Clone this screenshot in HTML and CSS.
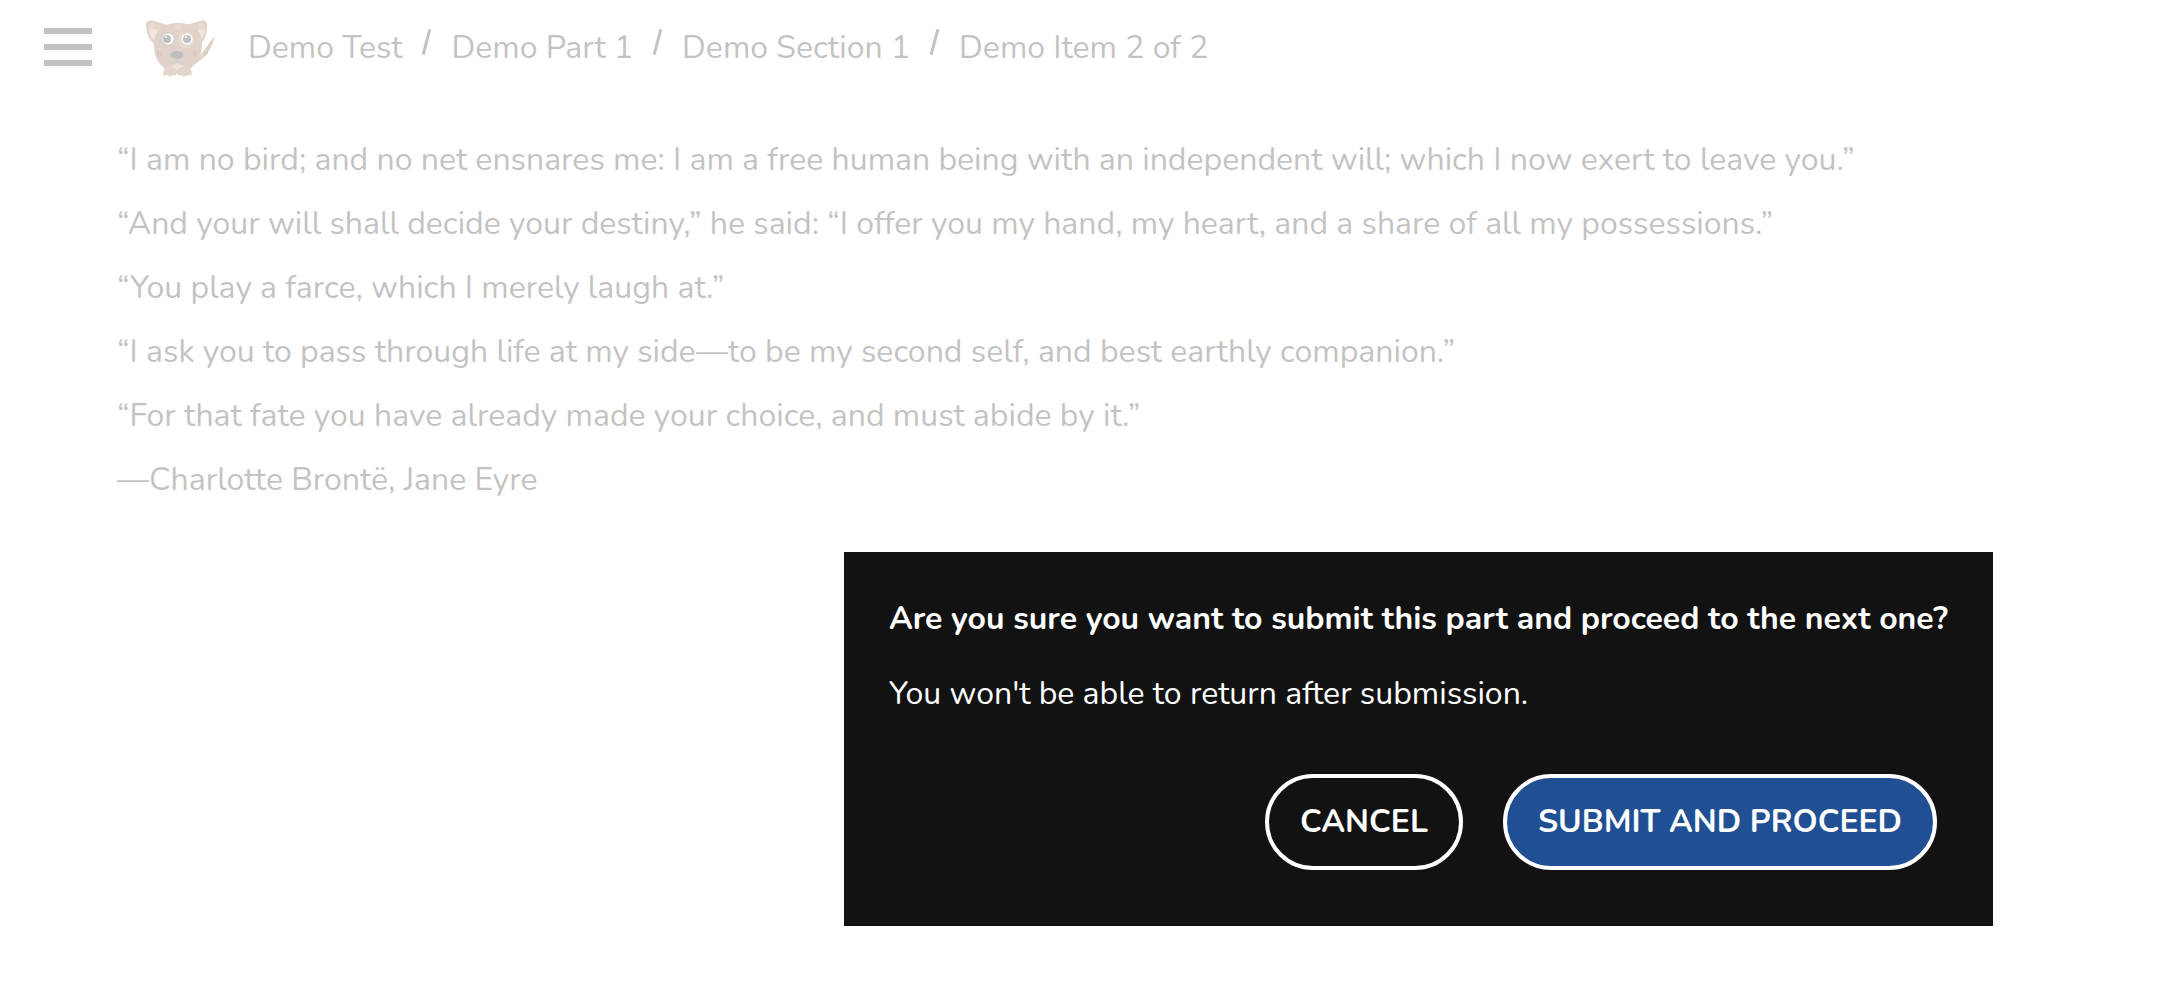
FILE: index.html
```html
<!DOCTYPE html>
<html lang="en">
<head>
    <meta charset="utf-8">
    <title>Demo Test</title>
    <link rel="stylesheet" href="styles.css">
</head>
<body>
    <div class="page">
        <header class="topbar">
            <button class="menu-button" type="button" aria-label="Menu">
                <span class="menu-line"></span>
                <span class="menu-line"></span>
                <span class="menu-line"></span>
            </button>
            <svg class="logo" viewBox="0 -3 70 60" aria-hidden="true">
                <!-- tail -->
                <path d="M69 16 C66 27 62 36 48 45 L49 38 C58 34 61 24 69 16Z" fill="#94552e"/>
                <path d="M58 33 L62 29 L62 33 L58 37Z" fill="#6d3318"/>
                <!-- ears -->
                <path d="M0 7 C-1 1 4 -1 8 1 L22 5 L10 25 C3 21 1 14 0 7Z" fill="#965a38"/>
                <path d="M61 7 C62 1 58 -1 54 1 L40 5 L53 25 C59 21 61 14 61 7Z" fill="#965a38"/>
                <path d="M3 9 L15 10 L9 21 C5 18 3 14 3 9Z" fill="#cf9c78"/>
                <path d="M59 9 L47 10 L54 21 C57 18 59 14 59 9Z" fill="#cf9c78"/>
                <circle cx="6" cy="6" r="3" fill="#b8744f"/>
                <circle cx="55" cy="6" r="3" fill="#b8744f"/>
                <!-- head -->
                <path d="M32 3 C48 3 56 12 56 23 C56 31 54 40 46 47 L44 50 L19 50 L17 47 C9 40 8 31 8 23 C8 12 16 3 32 3Z" fill="#8c5330"/>
                <path d="M25 46 L31 42 L38 46 L31 52Z" fill="#c38d69"/>
                <!-- feet -->
                <path d="M17 53 C18 49 20 47 24 47 C28 47 30 49 31 51 C32 49 34 47 38 47 C43 47 45 50 46 53 C46 56 43 56 41 55 C39 57 36 57 35 55 C32 56 31 55 31 52 C31 55 30 56 27 55 C26 57 23 57 22 55 C19 56 16 56 17 53Z" fill="#99603a"/>
                <circle cx="32" cy="7" r="3" fill="#b9653c"/>
                <circle cx="21" cy="20" r="8" fill="#62503f"/>
                <circle cx="40" cy="20" r="8" fill="#a8704a"/>
                <circle cx="22" cy="19" r="5.5" fill="#fff"/>
                <circle cx="41" cy="19" r="5.5" fill="#fff"/>
                <circle cx="21" cy="19" r="4" fill="#000"/>
                <circle cx="41" cy="19" r="4" fill="#000"/>
                <circle cx="20" cy="17" r="1" fill="#fff"/>
                <circle cx="40" cy="17" r="1" fill="#fff"/>
                <ellipse cx="31" cy="35" rx="6.5" ry="4" fill="#000"/>
                <path d="M31 39 L31 41 C30 45 25 45 23 40 M31 41 C32 45 37 45 39 40" fill="none" stroke="#333" stroke-width="0.8"/>
                <ellipse cx="13" cy="34" rx="2.5" ry="3.5" fill="#6b3a22"/>
                <ellipse cx="49" cy="34" rx="2.5" ry="3.5" fill="#6b3a22"/>
            </svg>
            <nav aria-label="Breadcrumb">
                <ol class="breadcrumb">
                    <li>Demo Test</li>
                    <li>Demo Part 1</li>
                    <li>Demo Section 1</li>
                    <li>Demo Item 2 of 2</li>
                </ol>
            </nav>
        </header>
        <main class="content">
            <p>“I am no bird; and no net ensnares me: I am a free human being with an independent will; which I now exert to leave you.”</p>
            <p>“And your will shall decide your destiny,” he said: “I offer you my hand, my heart, and a share of all my possessions.”</p>
            <p>“You play a farce, which I merely laugh at.”</p>
            <p>“I ask you to pass through life at my side—to be my second self, and best earthly companion.”</p>
            <p>“For that fate you have already made your choice, and must abide by it.”</p>
            <p>—Charlotte Brontë, Jane Eyre</p>
        </main>
    </div>
    <div class="dialog" role="dialog" aria-labelledby="dialog-title">
        <h2 id="dialog-title">Are you sure you want to submit this part and proceed to the next one?</h2>
        <p>You won't be able to return after submission.</p>
        <div class="dialog-buttons">
            <button class="cancel" type="button">CANCEL</button>
            <button class="submit" type="button">SUBMIT AND PROCEED</button>
        </div>
    </div>
</body>
</html>
```
FILE: styles.css
```css
* {
    box-sizing: border-box;
}
body {
    margin: 0;
    background: #fff;
    color: #111;
    font-family: Nunito, "Nunito Sans", Lato, sans-serif;
    font-size: 32px;
    line-height: 44px;
}
.page {
    opacity: 0.25;
}
.topbar {
    display: flex;
    align-items: center;
    height: 94px;
    padding-left: 44px;
}
.menu-button {
    display: flex;
    flex-direction: column;
    gap: 10px;
    width: 48px;
    margin-right: 54px;
    padding: 0;
    border: none;
    background: none;
}
.menu-line {
    height: 6px;
    background: #111;
}
.logo {
    width: 70px;
    height: 60px;
    margin-right: 32px;
}
.breadcrumb {
    display: flex;
    margin: 0;
    padding: 2px 0 0;
    list-style: none;
}
.breadcrumb li + li::before {
    content: "";
    display: inline-block;
    height: 26px;
    margin: 0 23px 3px;
    border-right: 3px solid #111;
    transform: rotate(15deg);
}
.content {
    padding: 44px 117px;
}
.content p {
    margin: 0 0 20px;
}
.dialog {
    position: absolute;
    right: 185px;
    bottom: 66px;
    padding: 45px 45px 56px;
    background: #121212;
    color: #fff;
}
.dialog h2 {
    margin: 0 0 31px;
    font-size: 32px;
    font-weight: bold;
}
.dialog p {
    margin: 0;
}
.dialog-buttons {
    display: flex;
    justify-content: flex-end;
    gap: 40px;
    margin: 58px 11px 0 0;
}
.dialog-buttons button {
    height: 96px;
    padding: 0 31px;
    border: 4px solid #fff;
    border-radius: 48px;
    background: #121212;
    color: #fff;
    font: inherit;
    font-weight: bold;
    cursor: pointer;
}
.dialog-buttons .submit {
    background: #205093;
}
```
